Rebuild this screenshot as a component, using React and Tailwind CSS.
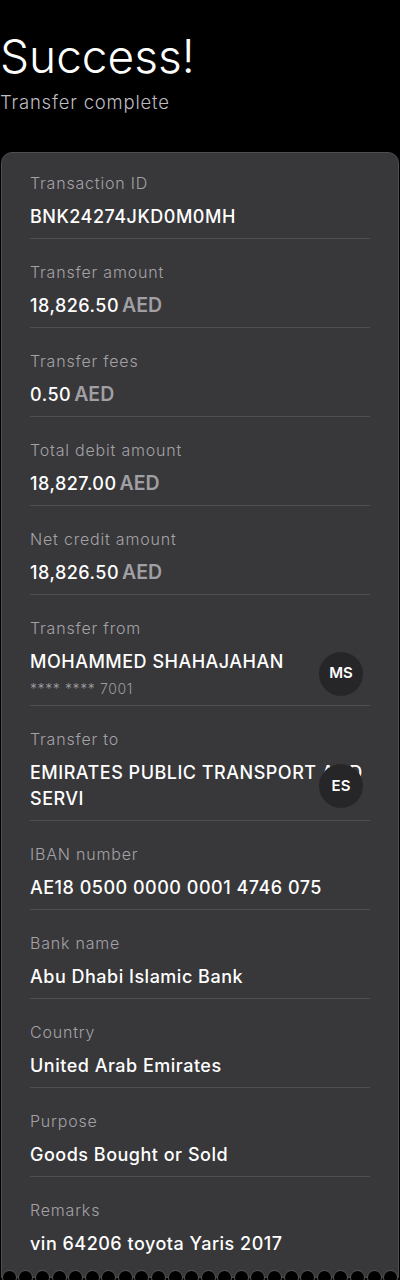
import React from 'react';

const rows = [
  { label: 'Transaction ID', value: 'BNK24274JKD0M0MH' },
  { label: 'Transfer amount', value: '18,826.50', unit: 'AED' },
  { label: 'Transfer fees', value: '0.50', unit: 'AED' },
  { label: 'Total debit amount', value: '18,827.00', unit: 'AED' },
  { label: 'Net credit amount', value: '18,826.50', unit: 'AED' },
  { label: 'Transfer from', value: 'MOHAMMED SHAHAJAHAN', sub: '**** **** 7001', avatar: 'MS' },
  { label: 'Transfer to', value: 'EMIRATES PUBLIC TRANSPORT AND SERVI', avatar: 'ES' },
  { label: 'IBAN number', value: 'AE18 0500 0000 0001 4746 075' },
  { label: 'Bank name', value: 'Abu Dhabi Islamic Bank' },
  { label: 'Country', value: 'United Arab Emirates' },
  { label: 'Purpose', value: 'Goods Bought or Sold' },
  { label: 'Remarks', value: 'vin 64206 toyota Yaris 2017' },
];

function Row({ row, last }) {
  return (
    <div className={`pt-[22px] first:pt-[19px] ${last ? 'pb-[20px]' : row.sub ? 'pb-[7px] border-b border-[#4f4e52]' : 'pb-[8px] border-b border-[#4f4e52]'}`}>
      <div className="h-[22px] text-[16px] leading-[22px] font-light tracking-[0.8px] text-[#a3a2a6]">{row.label}</div>
      <div className="relative mt-[10px]">
        <div className="text-[18px] leading-[26px] font-medium tracking-[0.5px] text-white">
          {row.value}
          {row.unit && <span className="ml-[3px] text-[19.5px] leading-none font-semibold tracking-normal text-[#a09fa3]">{row.unit}</span>}
        </div>
        {row.sub && (
          <div className="mt-[5px] text-[14px] leading-[18px] font-light tracking-[0.6px] text-[#9d9ca0]">{row.sub}</div>
        )}
        {row.avatar && (
          <div className="absolute right-[7px] top-1/2 -translate-y-1/2 w-[44px] h-[44px] rounded-full bg-[#262528] flex items-center justify-center text-[15px] font-semibold text-white">
            {row.avatar}
          </div>
        )}
      </div>
    </div>
  );
}

export default function App() {
  return (
    <div className="min-h-screen bg-black overflow-hidden" style={{ fontFamily: 'Inter, "Noto Sans", sans-serif' }}>
      <div className="pt-[30px] pb-[38px]">
        <h1 className="text-[46px] leading-[52px] font-light text-white">Success!</h1>
        <p className="mt-[8px] text-[18.5px] leading-[24px] font-light tracking-[0.8px] text-[#bdbcc0]">Transfer complete</p>
      </div>

      <div className="relative mx-px rounded-t-[11px] border border-[#4e4d51] bg-[#38373a] px-[28px]">
        {rows.map((row, i) => (
          <Row key={row.label} row={row} last={i === rows.length - 1} />
        ))}
        <div className="absolute -left-px -right-px bottom-[-8px] flex">
          {Array.from({ length: 24 }).map((_, i) => (
            <div key={i} className="w-[16.667px] flex justify-center">
              <div className="w-[15px] h-[15px] rounded-full bg-black border border-[#57565a]" />
            </div>
          ))}
        </div>
      </div>
    </div>
  );
}
